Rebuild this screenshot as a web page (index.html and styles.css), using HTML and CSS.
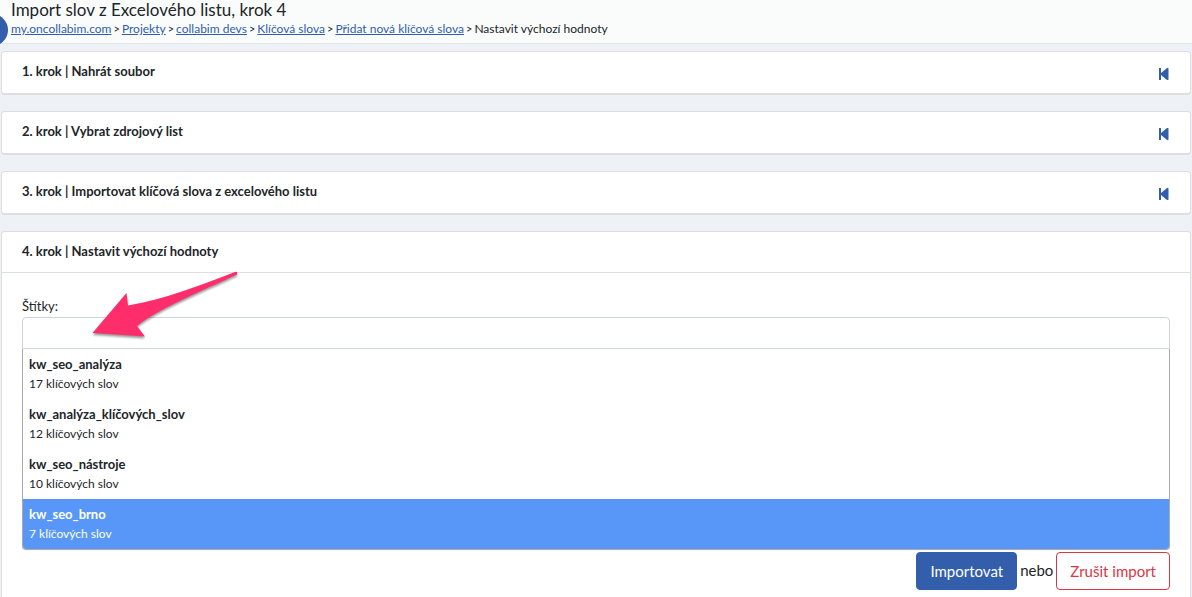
FILE: index.html
```html
<!DOCTYPE html>
<html lang="cs">
<head>
<meta charset="utf-8">
<meta name="viewport" content="width=device-width, initial-scale=1">
<title>Import slov z Excelového listu, krok 4</title>
<link rel="stylesheet" href="styles.css">
</head>
<body>
<header class="page-header">
  <button class="side-toggle" type="button" aria-label="Menu"></button>
  <h1 class="page-title">Import slov z Excelového listu, krok 4</h1>
  <nav class="breadcrumbs">
    <a href="#">my.oncollabim.com</a><span class="separator">&gt;</span>
    <a href="#">Projekty</a><span class="separator">&gt;</span>
    <a href="#">collabim devs</a><span class="separator">&gt;</span>
    <a href="#">Klíčová slova</a><span class="separator">&gt;</span>
    <a href="#">Přidat nová klíčová slova</a><span class="separator">&gt;</span>
    <span>Nastavit výchozí hodnoty</span>
  </nav>
</header>
<main class="steps">
  <section class="card">
    <div class="card-header"><h2 class="card-title">1. krok | Nahrát soubor</h2>
      <a class="step-back" href="#" aria-label="Zpět na 1. krok"><svg width="10" height="12" viewBox="0 0 10 12"><path d="M0 0h2v5L8 0q1.500-.6 1.500 1v10q0 1.600-1.500 1L2 7v5H0z"/></svg></a></div>
  </section>
  <section class="card">
    <div class="card-header"><h2 class="card-title">2. krok | Vybrat zdrojový list</h2>
      <a class="step-back" href="#" aria-label="Zpět na 2. krok"><svg width="10" height="12" viewBox="0 0 10 12"><path d="M0 0h2v5L8 0q1.500-.6 1.500 1v10q0 1.600-1.500 1L2 7v5H0z"/></svg></a></div>
  </section>
  <section class="card">
    <div class="card-header"><h2 class="card-title">3. krok | Importovat klíčová slova z excelového listu</h2>
      <a class="step-back" href="#" aria-label="Zpět na 3. krok"><svg width="10" height="12" viewBox="0 0 10 12"><path d="M0 0h2v5L8 0q1.500-.6 1.500 1v10q0 1.600-1.500 1L2 7v5H0z"/></svg></a></div>
  </section>
  <section class="card card-open">
    <div class="card-header"><h2 class="card-title">4. krok | Nastavit výchozí hodnoty</h2></div>
    <form class="card-body">
      <label class="field-label" for="tags">Štítky:</label>
      <div class="tag-picker">
        <input class="tag-input" id="tags" type="text" role="combobox" aria-expanded="true" aria-controls="tag-list" autocomplete="off">
        <ul class="tag-list" id="tag-list" role="listbox">
          <li class="tag-option" role="option"><strong>kw_seo_analýza</strong><span>17 klíčových slov</span></li>
          <li class="tag-option" role="option"><strong>kw_analýza_klíčových_slov</strong><span>12 klíčových slov</span></li>
          <li class="tag-option" role="option"><strong>kw_seo_nástroje</strong><span>10 klíčových slov</span></li>
          <li class="tag-option active" role="option" aria-selected="true"><strong>kw_seo_brno</strong><span>7 klíčových slov</span></li>
        </ul>
        <svg class="pointer" width="160" height="80" viewBox="0 0 160 80" aria-hidden="true"><path d="M10.500 63L44.500 23L46 35.500C84 29 116 16 153 2Q156 1 155 4.500C120 21 76 39 55 56L63 66.500z"/></svg>
      </div>
      <div class="actions">
        <button class="btn btn-primary" type="submit">Importovat</button>
        <span class="or">nebo</span>
        <button class="btn btn-cancel" type="button">Zrušit import</button>
      </div>
    </form>
  </section>
</main>
</body>
</html>
```
FILE: styles.css
```css
* { box-sizing: border-box; }
html { overflow: hidden; }
body {
  margin: 0;
  background: #eef2f6;
  color: #212529;
  font-family: Lato, "Open Sans", sans-serif;
  font-size: 13px;
  line-height: 20px;
}
.page-header {
  position: relative;
  height: 44px;
  padding: 0 11px;
  background: #fafcfb;
  border-bottom: 1px solid #e0e4e5;
}
.page-title {
  margin: 0;
  font-size: 17px;
  line-height: 19px;
  font-weight: 400;
}
.breadcrumbs {
  display: flex;
  gap: 2px;
  font-size: 12px;
  line-height: 20px;
  white-space: nowrap;
}
.breadcrumbs a { color: #2f5dad; text-decoration: underline; }
.separator { font-size: 11px; }
.side-toggle {
  position: absolute;
  left: -24px;
  top: 14px;
  width: 32px;
  height: 32px;
  padding: 0;
  border: 0;
  border-radius: 50%;
  background: #335eab;
}
.steps {
  display: flex;
  flex-direction: column;
  gap: 16px;
  padding: 7px 1px 0;
}
.card {
  background: #fff;
  border: 1px solid #dcdee1;
  border-bottom-width: 2px;
  border-radius: 4px;
}
.card-open { padding-bottom: 24px; }
.card-header {
  display: flex;
  justify-content: space-between;
  align-items: flex-start;
  height: 41px;
  padding: 9px 21px 0 20px;
}
.card-open .card-header { border-bottom: 1px solid #dcdee1; }
.card-title { margin: 0; font-size: 13px; line-height: 20px; font-weight: 700; }
.step-back { display: block; padding-top: 7px; }
.step-back svg { display: block; fill: #335eab; }
.card-body { padding: 23px 20px 0; }
.field-label { display: block; line-height: 21px; }
.tag-picker { position: relative; }
.tag-input {
  display: block;
  width: 100%;
  height: 32px;
  padding: 0 6px;
  border: 1px solid #ced4da;
  border-radius: 4px 4px 0 0;
  background: #fff;
  font: inherit;
  outline: 0;
}
.tag-list {
  position: absolute;
  z-index: 1;
  top: 100%;
  left: 0;
  right: 0;
  margin: 0;
  padding: 0;
  overflow: hidden;
  list-style: none;
  background: #fff;
  border: 1px solid #aaa;
  border-top: 0;
  border-radius: 0 0 4px 4px;
}
.tag-option {
  display: flex;
  flex-direction: column;
  padding: 6px;
  font-size: 12px;
  line-height: 19px;
}
.tag-option strong { font-size: 13px; }
.tag-option.active { background: #5897f8; color: #fff; }
.pointer {
  position: absolute;
  z-index: 2;
  left: 60px;
  top: -47px;
  fill: #ff2d6c;
  filter: drop-shadow(0 2px 1px rgba(0, 0, 0, .4));
}
.actions {
  display: flex;
  justify-content: flex-end;
  gap: 3px;
  margin-top: 203px;
  font-size: 15px;
}
.or { line-height: 36px; }
.btn {
  height: 38px;
  padding: 0 13px;
  border: 1px solid #335eab;
  border-radius: 4px;
  font: inherit;
}
.btn-primary { background: #335eab; color: #fff; }
.btn-cancel { background: #fff; border-color: #dc3545; color: #dc3545; }
```
